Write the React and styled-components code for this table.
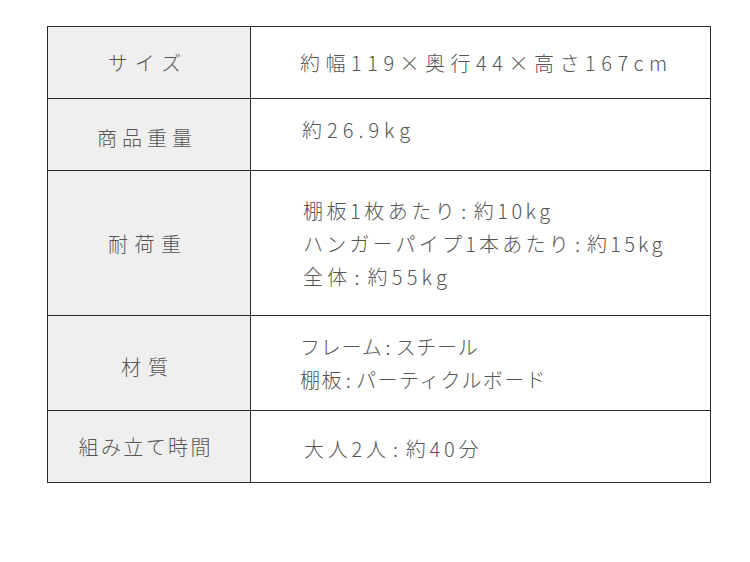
import React from 'react';
import styled, { createGlobalStyle } from 'styled-components';

const GlobalStyle = createGlobalStyle`
  body {
    margin: 0;
    background: #ffffff;
    font-family: "Noto Sans CJK JP", "Noto Sans", sans-serif;
  }
`;

const Page = styled.div`
  padding: 26px 0 0 47px;
`;

const SpecGrid = styled.div`
  display: grid;
  grid-template-columns: 203px 460px;
  grid-template-rows: 72px 72px 145px 95px 72px;
  width: 664px;
  border-top: 1px solid #2b2b2b;
  border-left: 1px solid #2b2b2b;
  box-sizing: border-box;
`;

const Cell = styled.div`
  box-sizing: border-box;
  border-right: 1px solid #2b2b2b;
  border-bottom: 1px solid #2b2b2b;
  display: flex;
  align-items: center;
  color: #555555;
  font-size: 20px;
  font-weight: 300;
`;

// visible text centre sits ~4.5px left of the cell centre
const LabelCell = styled(Cell)`
  background: #efefef;
  justify-content: center;
  letter-spacing: ${props => props.spacing}px;
  padding-right: ${props => 9 - props.spacing}px;
  padding-top: ${props => props.drop || 0}px;
`;

const ValueCell = styled(Cell)`
  padding-left: ${props => props.indent}px;
  padding-bottom: ${props => props.lift || 0}px;
  padding-top: ${props => props.drop || 0}px;
`;

const Lines = styled.div`
  display: flex;
  flex-direction: column;
  line-height: 33px;
`;

const Line = styled.span`
  white-space: nowrap;
  letter-spacing: ${props => props.spacing}px;
`;

const Colon = styled.span`
  margin: 0 4px 0 3px;
`;

const specs = [
  { label: 'サイズ', spacing: 7, indent: 49, lines: [['約幅119×奥行44×高さ167cm', 5.5]] },
  { label: '商品重量', spacing: 5, drop: 6, indent: 51, lift: 10, lines: [['約26.9kg', 5]] },
  {
    label: '耐荷重', spacing: 6.5, indent: 52,
    lines: [['棚板1枚あたり:約10kg', 3.5], ['ハンガーパイプ1本あたり:約15kg', 3.2], ['全体:約55kg', 4.2]],
  },
  { label: '材質', spacing: 7, drop: 6, indent: 49, lines: [['フレーム:スチール', 0.8], ['棚板:パーティクルボード', 1.4]] },
  { label: '組み立て時間', spacing: 2.4, indent: 53, drop: 4, lines: [['大人2人:約40分', 3.8]] },
];

function SpecLine({ text, spacing }) {
  const parts = text.split(':');
  return (
    <Line spacing={spacing}>
      {parts.length > 1 ? (
        <>
          {parts[0]}
          <Colon>:</Colon>
          {parts[1]}
        </>
      ) : text}
    </Line>
  );
}

export default function App() {
  return (
    <>
      <GlobalStyle />
      <Page>
        <SpecGrid>
          {specs.map(spec => (
            <React.Fragment key={spec.label}>
              <LabelCell spacing={spec.spacing} drop={spec.drop && spec.label !== '組み立て時間' ? spec.drop : 0}>
                {spec.label}
              </LabelCell>
              <ValueCell
                indent={spec.indent}
                lift={spec.lift}
                drop={spec.label === '組み立て時間' ? spec.drop : 0}
              >
                <Lines>
                  {spec.lines.map(([text, spacing]) => (
                    <SpecLine key={text} text={text} spacing={spacing} />
                  ))}
                </Lines>
              </ValueCell>
            </React.Fragment>
          ))}
        </SpecGrid>
      </Page>
    </>
  );
}
